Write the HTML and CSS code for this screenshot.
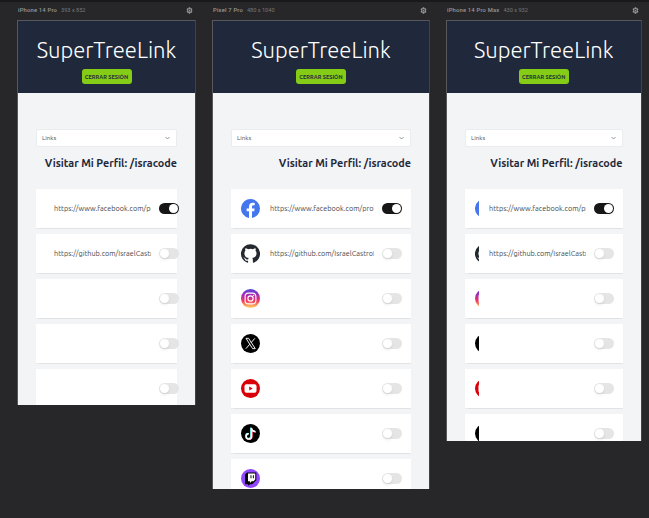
FILE: index.html
```
<!DOCTYPE html>
<html lang="es">
<head>
<meta charset="utf-8">
<title>SuperTreeLink</title>
<link rel="stylesheet" href="styles.css">
</head>
<body>
<svg class="defs" aria-hidden="true">
  <defs>
    <linearGradient id="ig" x1="0" y1="0" x2="0" y2="1"><stop offset="0" stop-color="#5146d8"/><stop offset=".3" stop-color="#a52ab5"/><stop offset=".62" stop-color="#ee3865"/><stop offset=".85" stop-color="#fb9a55"/><stop offset="1" stop-color="#ffd776"/></linearGradient>
    <symbol id="facebook" viewBox="0 0 24 24"><path fill="#4676ed" d="M24 12A12 12 0 1 0 10.1 23.85V15.5H7.1V12h3V9.4c0-3 1.8-4.7 4.5-4.7 1.3 0 2.7.25 2.7.25v2.9h-1.5c-1.5 0-1.9.9-1.9 1.85V12h3.3l-.5 3.5h-2.8v8.35A12 12 0 0 0 24 12z"/></symbol>
    <symbol id="github" viewBox="0 0 24 24"><path fill="#24292f" d="M12 .3a12 12 0 0 0-3.8 23.4c.6.1.8-.3.8-.6v-2c-3.3.7-4-1.6-4-1.6-.6-1.4-1.4-1.8-1.4-1.8-1-.7.1-.7.1-.7 1.2 0 1.9 1.2 1.9 1.2 1 1.8 2.8 1.3 3.5 1 0-.8.4-1.3.7-1.6-2.7-.3-5.5-1.3-5.5-6 0-1.2.5-2.3 1.3-3.1-.2-.4-.6-1.6 0-3.2 0 0 1-.3 3.4 1.2a11.5 11.5 0 0 1 6 0c2.3-1.5 3.3-1.2 3.3-1.2.6 1.6.2 2.8 0 3.2.9.8 1.3 1.9 1.3 3.2 0 4.6-2.8 5.6-5.5 5.9.5.4.9 1 .9 2.2v3.3c0 .3.1.7.8.6A12 12 0 0 0 12 .3"/></symbol>
    <symbol id="instagram" viewBox="0 0 24 24"><circle cx="12" cy="12" r="12" fill="url(#ig)"/><g fill="none" stroke="#fff" stroke-width="1.4"><rect x="5.2" y="5.2" width="13.6" height="13.6" rx="4"/><circle cx="12" cy="12" r="3.3"/></g><circle cx="15.9" cy="8.1" r=".9" fill="#fff"/></symbol>
    <symbol id="x" viewBox="0 0 24 24"><circle cx="12" cy="12" r="12"/><path d="M6.3 5.5h3.3l8.4 13h-3.3zM17.5 5.5l-4.7 5.4M11.1 12.9l-4.9 5.6" fill="none" stroke="#fff" stroke-width="1.2"/></symbol>
    <symbol id="youtube" viewBox="0 0 24 24"><circle cx="12" cy="12" r="12" fill="#d90007"/><rect x="4.4" y="6.7" width="15.2" height="10.6" rx="2.4" fill="#fff"/><path fill="#d90007" d="m10.4 9.6 4.3 2.4-4.3 2.4z"/></symbol>
    <symbol id="tiktok" viewBox="0 0 24 24"><circle cx="12" cy="12" r="12"/><g fill="none" stroke-width="1.9"><path stroke="#3ee5df" d="M12.4 4.5v10.6a3.2 3.2 0 1 1-3.2-3.2M12.4 4.5c0 2.6 2 4.2 4.9 4.2"/><path stroke="#f33b63" d="M14 5.7v10.6a3.4 3.4 0 0 1-5.7 2M14 5.7c.2 2.8 2 4.4 5 4.4"/><path stroke="#fff" d="M13.2 5.1v10.6a3.3 3.3 0 1 1-3.3-3.3M13.2 5.1c.2 2.8 2 4.4 5 4.4"/></g></symbol>
    <symbol id="twitch" viewBox="0 0 24 24"><circle cx="12" cy="12" r="12" fill="#9146ff"/><path d="M7.7 4.4h11.6v9.8l-5.2 5h-2.8L9 21.2v-2H5.1V7z"/><path fill="#fff" d="M8.8 5.6h9.2v7.8l-2.2 2.2h-2.4l-2 2v-2H8.8z"/><path d="M12 7.8h1.2v4H12zM15 7.8h1.2v4H15z"/></symbol>
    <symbol id="gear" viewBox="0 0 24 24"><path fill="#98989c" fill-rule="evenodd" d="M9.5 1h5l.6 3.2 1.5.9L19.7 4l2.5 4.3-2.5 2.2v3l2.5 2.2-2.5 4.3-3.1-1.1-1.5.9-.6 3.2h-5l-.6-3.2-1.5-.9L4.3 20l-2.5-4.3 2.5-2.2v-3L1.8 8.3 4.3 4l3.1 1.1 1.5-.9zM12 7a5 5 0 1 0 0 10 5 5 0 0 0 0-10z"/><circle cx="12" cy="12" r="3" fill="#98989c"/></symbol>
  </defs>
</svg>
<main class="canvas"></main>
<script src="app.js"></script>
</body>
</html>
```
FILE: styles.css
```
* { box-sizing: border-box; }
body { margin: 0; background: #272729; font-family: Ubuntu, "Noto Sans", sans-serif; overflow: hidden; }
.defs { position: absolute; width: 0; height: 0; }
.canvas { display: flex; align-items: flex-start; height: 518px; padding-left: 17px; border-top: 2px solid #19191c; }
.device { flex: none; margin-right: 16px; }
.bar { display: flex; align-items: center; height: 18px; padding: 0 3px 2px 1px; font: 500 5.8px/8px Roboto, sans-serif; color: #98989b; white-space: nowrap; }
.bar .name { letter-spacing: .2px; }
.bar .size { margin-left: 4px; color: #77777b; font-weight: 400; font-size: 5.6px; }
.bar svg { width: 7px; height: 7px; margin-left: auto; }
.screen { overflow: hidden; background: #f3f4f6; border: 1px solid #57585b; border-bottom: 0; border-right-color: #414246; }
.iphone { width: 179px; }
.pixel { width: 218px; }
.max { width: 195.5px; }
.iphone .screen { height: 385px; }
.pixel .screen { height: 469px; }
.max .screen { height: 421px; }
.head { height: 72px; background: #1f293b; display: flex; flex-direction: column; align-items: center; }
.head h1 { margin: 14px 0 0; font-size: 22px; line-height: 30px; font-weight: 300; color: #fff; white-space: nowrap; }
.logout { display: flex; align-items: center; justify-content: center; width: 50px; height: 15px; margin-top: 4px; border-radius: 3px; background: #84cc16; color: #24313a; font-size: 5.6px; font-weight: 700; white-space: nowrap; }
.body { padding: 36px 18px 0; }
.select { display: flex; align-items: center; justify-content: space-between; height: 17.5px; padding: 0 6px 0 5px; background: #fff; border: 1px solid #eaecef; border-radius: 2px; font-size: 6.3px; color: #4d535c; }
.select svg { width: 5px; height: 4px; }
.profile { margin: 7px 0 17px; height: 18px; font-size: 10.8px; line-height: 18px; font-weight: 600; color: #1f293b; text-align: right; white-space: nowrap; }
.card { display: flex; align-items: center; height: 39px; margin-bottom: 6px; padding-left: 10px; background: #fff; box-shadow: 0 .5px 1px #00000012; }
.icon { flex: none; width: 19px; height: 19px; overflow: hidden; margin-right: 10px; }
.icon svg { display: block; width: 19px; height: 19px; }
.iphone .icon { width: 0; margin-right: 8px; }
.max .icon { width: 4px; }
.url { flex: none; width: 96.5px; overflow: hidden; font-size: 7.3px; line-height: 12px; color: #454950; white-space: nowrap; }
.pixel .url { width: 103.5px; }
.toggle { flex: none; width: 20px; height: 11px; margin-left: 8.5px; padding: 1px; border-radius: 6px; background: #e5e5e5; }
.toggle::before { content: ""; display: block; width: 9px; height: 9px; border-radius: 50%; background: #fff; box-shadow: 0 2px 3px #00000014; }
.toggle.on { background: #171717; }
.toggle.on::before { margin-left: 9px; }
```
FILE: app.js
```
const devices = [
  { id: "iphone", name: "iPhone 14 Pro", size: "393 x 852" },
  { id: "pixel", name: "Pixel 7 Pro", size: "480 x 1040" },
  { id: "max", name: "iPhone 14 Pro Max", size: "430 x 932" }
];
const links = [
  ["facebook", "https://www.facebook.com/profile"],
  ["github", "https://github.com/IsraelCastroI"],
  ["instagram", ""], ["x", ""], ["youtube", ""], ["tiktok", ""], ["twitch", ""]
];
const cards = links.map(([icon, url], i) => `
  <div class="card">
    <div class="icon"><svg><use href="#${icon}"/></svg></div>
    <div class="url">${url}</div>
    <div class="toggle ${i === 0 ? "on" : ""}"></div>
  </div>`).join("");
document.querySelector(".canvas").innerHTML = devices.map(d => `
  <section class="device ${d.id}">
    <div class="bar"><span class="name">${d.name}</span><span class="size">${d.size}</span><svg><use href="#gear"/></svg></div>
    <div class="screen">
      <header class="head"><h1>SuperTreeLink</h1><div class="logout">CERRAR SESIÓN</div></header>
      <div class="body">
        <div class="select"><span>Links</span><svg viewBox="0 0 10 8"><path d="M1 2l4 4 4-4" fill="none" stroke="#777d86" stroke-width="1.6"/></svg></div>
        <div class="profile">Visitar Mi Perfil: /isracode</div>
        ${cards}
      </div>
    </div>
  </section>`).join("");
```
